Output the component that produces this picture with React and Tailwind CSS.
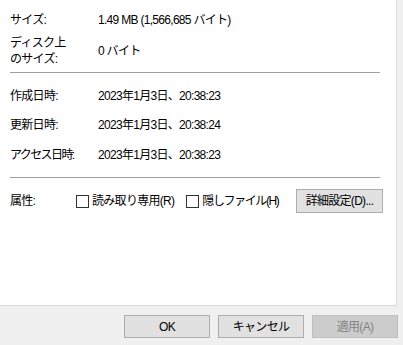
export default function App() {
  const font = { fontFamily: '"Liberation Sans", "Noto Sans CJK JP", sans-serif' };
  const Row = ({ label, value, className = '', labelClass = '' }) => (
    <div className={`flex h-4 items-center pl-[10px] ${className}`}>
      <div className={`w-[88px] ${labelClass}`}>{label}</div>
      <div>{value}</div>
    </div>
  );
  const Check = ({ label, className = '', textClass = '' }) => (
    <label className={`flex items-center ${className}`}>
      <span className="h-[13px] w-[13px] border border-[#333333] bg-white" />
      <span className={`ml-[3px] ${textClass}`}>{label}</span>
    </label>
  );
  const Btn = ({ children, disabled }) => (
    <button
      className={`flex h-[23px] w-[86px] items-center justify-center border ${
        disabled ? 'border-[#bfbfbf] bg-[#cccccc] text-[#838383]' : 'border-[#adadad] bg-[#e1e1e1] text-black'
      }`}
    >
      {children}
    </button>
  );

  return (
    <div
      className="h-[345px] w-[403px] overflow-hidden bg-[#f0f0f0] text-[12px] leading-4 tracking-[-0.7px] text-black"
      style={font}
    >
      <div className="h-[306px] w-[397px] border-b border-r border-[#d9d9d9] bg-white pt-3">
        <Row label="サイズ:" value="1.49 MB (1,566,685 バイト)" />
        <div className="mt-[7px] flex h-8 items-center pl-[10px]">
          <div className="w-[88px]">
            <div>ディスク上</div>
            <div>のサイズ:</div>
          </div>
          <div>0 バイト</div>
        </div>
        <div className="ml-[10px] mt-[5px] h-px w-[370px] bg-[#a0a0a0]" />
        <Row className="mt-[15px]" label="作成日時:" value="2023年1月3日、20:38:23" />
        <Row className="mt-[13px]" label="更新日時:" value="2023年1月3日、20:38:24" />
        <Row
          className="mt-[14px]"
          labelClass="tracking-[-1.6px]"
          label="アクセス日時:"
          value="2023年1月3日、20:38:23"
        />
        <div className="ml-[10px] mt-[14px] h-px w-[370px] bg-[#a0a0a0]" />
        <div className="mt-[11px] flex h-6 items-center pl-[10px]">
          <div className="w-[66px]">属性:</div>
          <Check label="読み取り専用(R)" />
          <Check className="ml-[12px]" textClass="tracking-[-1.4px]" label="隠しファイル(H)" />
          <button className="ml-auto mr-[13px] flex h-6 w-[87px] items-center justify-center border border-[#adadad] bg-[#e1e1e1]">
            詳細設定(D)...
          </button>
        </div>
      </div>
      <div className="mt-[9px] flex justify-end gap-[8px] pr-[5px]">
        <Btn>OK</Btn>
        <Btn>キャンセル</Btn>
        <Btn disabled>適用(A)</Btn>
      </div>
    </div>
  );
}
